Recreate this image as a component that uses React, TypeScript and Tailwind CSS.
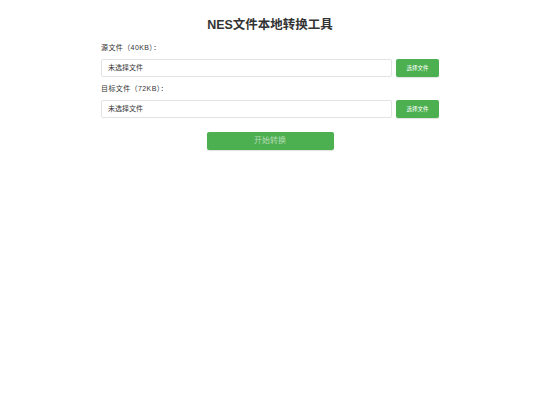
export default function App() {
  const font = { fontFamily: '"Liberation Sans", Arial, "Noto Sans CJK SC", sans-serif' };
  const Row = ({ label }: { label: string }) => (
    <>
      <div className="h-[10px] leading-[10px] text-[7px] tracking-[0.4px] text-[#333]">{label}</div>
      <div className="mt-[6px] flex h-[18px] gap-[4px]">
        <div className="flex flex-1 items-center rounded-[2px] border border-[#e3e3e3] bg-white pl-[6px] text-[7px] text-[#333]">
          未选择文件
        </div>
        <div className="flex w-[43px] items-center justify-center rounded-[2px] bg-[#4caf50] text-[5.5px] text-white shadow-[0_1px_1px_rgba(0,0,0,0.12)]">
          选择文件
        </div>
      </div>
    </>
  );
  return (
    <div className="min-h-[405px] w-[540px] bg-white pt-[17px]" style={font}>
      <h1 className="h-[16px] text-center text-[12.5px] font-bold leading-[16px] text-[#333]">NES文件本地转换工具</h1>
      <div className="mx-auto mt-[10px] w-[338px]">
        <Row label="源文件（40KB）：" />
        <div className="h-[7px]" />
        <Row label="目标文件（72KB）：" />
        <div className="mt-[14px] flex justify-center">
          <div className="flex h-[18px] w-[127px] items-center justify-center rounded-[2px] bg-[#4caf50] text-[8px] text-[#b5dcb6] shadow-[0_1px_1px_rgba(0,0,0,0.12)]">
            开始转换
          </div>
        </div>
      </div>
    </div>
  );
}
